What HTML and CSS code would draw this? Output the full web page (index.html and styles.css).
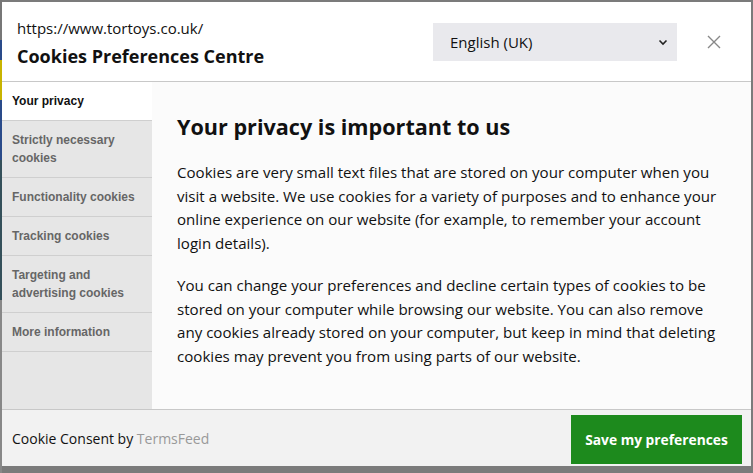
FILE: index.html
```html
<!DOCTYPE html>
<html lang="en">
<head>
<meta charset="utf-8">
<title>Cookies Preferences Centre</title>
<link rel="stylesheet" href="styles.css">
</head>
<body>
<div class="backdrop">
  <div class="modal">
    <header class="head">
      <div class="titles">
        <div class="url">https://www.tortoys.co.uk/</div>
        <div class="title">Cookies Preferences Centre</div>
      </div>
      <div class="lang">
        <span>English (UK)</span>
        <svg class="chev" width="10" height="7" viewBox="0 0 10 7"><path d="M1.5 1.5 L5 5 L8.5 1.5" fill="none" stroke="#222" stroke-width="1.6"/></svg>
      </div>
      <button class="close" aria-label="Close">
        <svg width="14" height="14" viewBox="0 0 14 14"><path d="M1 1 L13 13 M13 1 L1 13" stroke="#888" stroke-width="1.4" fill="none"/></svg>
      </button>
    </header>
    <div class="main">
      <nav class="nav">
        <div class="item active">Your privacy</div>
        <div class="item">Strictly necessary cookies</div>
        <div class="item">Functionality cookies</div>
        <div class="item">Tracking cookies</div>
        <div class="item">Targeting and advertising cookies</div>
        <div class="item">More information</div>
      </nav>
      <section class="content">
        <h2>Your privacy is important to us</h2>
        <p>Cookies are very small text files that are stored on your computer when you visit a website. We use cookies for a variety of purposes and to enhance your online experience on our website (for example, to remember your account login details).</p>
        <p>You can change your preferences and decline certain types of cookies to be stored on your computer while browsing our website. You can also remove any cookies already stored on your computer, but keep in mind that deleting cookies may prevent you from using parts of our website.</p>
      </section>
    </div>
    <footer class="foot">
      <div class="credit">Cookie Consent by <span class="tf">TermsFeed</span></div>
      <button class="save">Save my preferences</button>
    </footer>
  </div>
</div>
</body>
</html>
```
FILE: styles.css
```css
html, body { margin: 0; padding: 0; }
body {
  width: 753px; height: 473px; overflow: hidden;
  background: #7b7b7b;
  font-family: "Open Sans", "Noto Sans", sans-serif;
}
.backdrop {
  height: 473px;
  box-sizing: border-box;
  padding: 2px 2px 7px 2px;
  background: linear-gradient(to bottom, #777 0, #777 40px, #2a4b8a 40px, #2a4b8a 60px, #c8b400 60px, #c8b400 100px, #2a4b8a 100px, #2a4b8a 160px, #34505a 160px, #34505a 300px, #888 300px) left top / 2px 100% no-repeat, #7b7b7b;
}
.modal {
  height: 100%;
  display: flex; flex-direction: column;
  background: #fff;
}
.head {
  height: 79px;
  border-bottom: 1px solid #c8c8c8;
  display: flex; align-items: center;
  padding: 0 0 0 15px;
}
.titles { flex: 1; padding-top: 2px; }
.url { font-size: 15px; color: #111; line-height: 22px; }
.title { font-size: 18px; font-weight: 700; color: #111; line-height: 26px; margin-top: 4px; }
.lang {
  width: 244px; height: 38px; box-sizing: border-box;
  background: #e9e9ed;
  display: flex; align-items: center; justify-content: space-between;
  padding: 0 9px 0 17px;
  font-size: 15px; color: #111;
  margin-top: 1px;
}
.close {
  width: 74px; height: 40px;
  border: 0; background: none; padding: 0;
  display: flex; align-items: center; justify-content: center;
}
.main { flex: 1; display: flex; min-height: 0; }
.nav {
  width: 150px; background: #e6e6e6;
  font-family: "Liberation Sans", Arial, sans-serif;
}
.item {
  font-size: 12px; font-weight: 700; color: #666;
  line-height: 18px;
  padding: 10px 10px 10px 10px;
  border-bottom: 1px solid #cfcfcf;
}
.item.active { background: #fff; color: #111; }
.content {
  flex: 1; background: #fbfbfb;
  padding: 30px 26px 0 25px;
  color: #111;
}
h2 { margin: 0 0 19px 0; font-size: 21.6px; font-weight: 700; line-height: 30px; }
p { margin: 0 0 18px 0; font-size: 15.1px; line-height: 23.7px; }
.foot {
  height: 57px; box-sizing: border-box;
  border-top: 1px solid #c8c8c8;
  background: #f2f2f2;
  display: flex; align-items: center; justify-content: space-between;
  padding: 0 9px 0 10px;
}
.credit { font-size: 14px; color: #111; }
.tf { color: #999; }
.save {
  width: 171px; height: 49px; margin-top: 2px;
  background: #1d8a1d; color: #fff; border: 0;
  font-family: "Open Sans", "Noto Sans", sans-serif;
  font-size: 13.8px; font-weight: 700;
}
```
